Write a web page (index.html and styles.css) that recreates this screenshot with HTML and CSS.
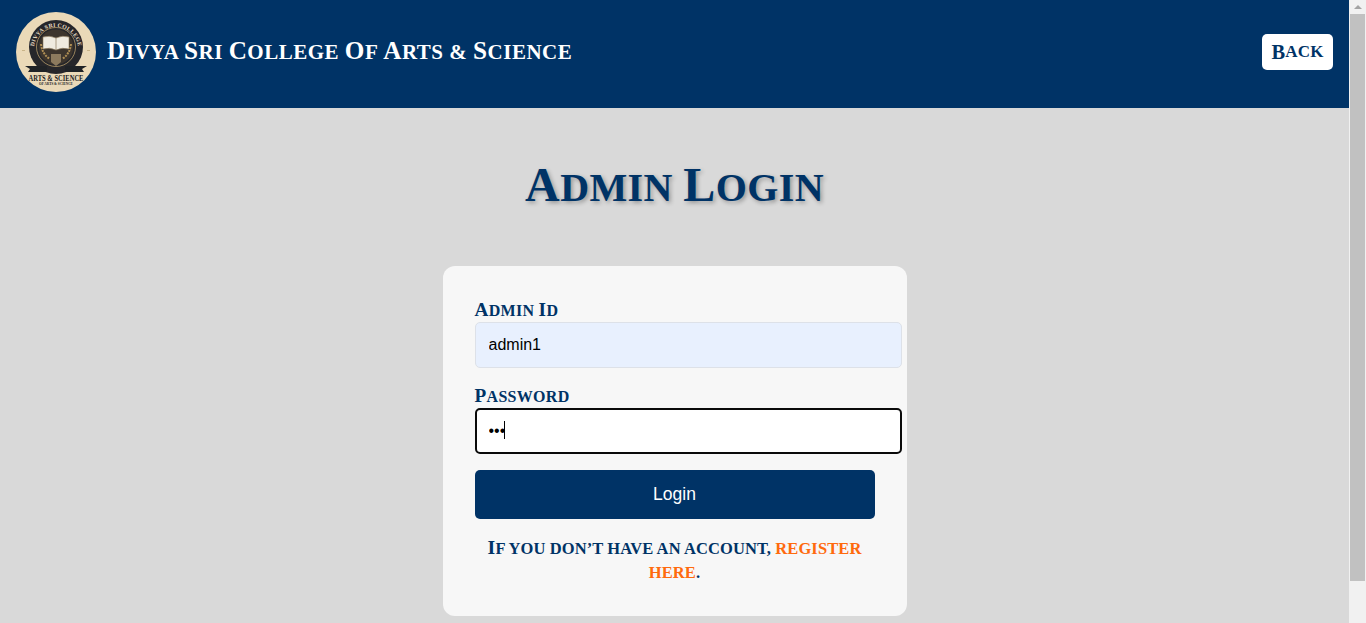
FILE: index.html
```html
<!DOCTYPE html>
<html lang="en">
<head>
<meta charset="utf-8">
<title>Admin Login</title>
<link rel="stylesheet" href="styles.css">
</head>
<body>
<div class="page">
  <div class="main">
    <header class="topbar">
      <div class="brand">
        <svg class="logo" viewBox="0 0 80 80" role="img" aria-label="College crest">
          <circle cx="40" cy="40" r="40" fill="#ead9b8"/>
          <circle cx="40" cy="35" r="27" fill="#26262a"/>
          <circle cx="40" cy="35" r="19.500" fill="none" stroke="#b59a68" stroke-width=".8"/>
          <circle cx="40" cy="35" r="17.500" fill="#3d352d"/>
          <path id="arc" d="M18 37a22 22 0 0 1 44 0" fill="none"/>
          <text class="logo-arc"><textPath href="#arc" startOffset="50%" text-anchor="middle">DIVYA SRI COLLEGE</textPath></text>
          <path d="M27 25q7-2 13 1q6-3 13-1v12q-7-2-13 1q-6-3-13-1z" fill="#f0ebe0" stroke="#8d7a5c" stroke-width=".6"/>
          <path d="M40 26v12" stroke="#8d7a5c" stroke-width=".7"/>
          <path d="M25 32q1 10 9 15M55 32q-1 10-9 15" fill="none" stroke="#b08f55" stroke-width="2" stroke-dasharray="2 1"/>
          <path d="M35 42h10v8l-5 4-5-4z" fill="#8c7a5e"/>
          <rect x="6" y="38" width="3" height="1" fill="#c9b488"/>
          <rect x="71" y="38" width="3" height="1" fill="#c9b488"/>
          <path d="M9 54h22v6H12l2-3zM71 54H49v6h19l-2-3z" fill="#1f2226"/>
          <text class="logo-main" text-anchor="middle" transform="translate(40 68.500) scale(.86 1)">ARTS &amp; SCIENCE</text>
          <text class="logo-sub" x="40" y="73" text-anchor="middle">OF ARTS &amp; SCIENCE</text>
        </svg>
        <span class="brand-name"><span class="cap">D</span>ivya <span class="cap">S</span>ri <span class="cap">C</span>ollege <span class="cap">O</span>f <span class="cap">A</span>rts &amp; <span class="cap">S</span>cience</span>
      </div>
      <a class="back" href="#"><span class="cap">B</span>ack</a>
    </header>
    <main class="content">
      <h1 class="heading"><span class="cap">A</span>dmin <span class="cap">L</span>ogin</h1>
      <form class="card">
        <label class="label" for="id"><span class="cap">A</span>dmin <span class="cap">I</span>d</label>
        <input class="field field-filled" id="id" type="text" value="admin1">
        <label class="label label-second" for="pw"><span class="cap">P</span>assword</label>
        <div class="field-wrap">
          <input class="field field-focus" id="pw" type="password" value="abc">
          <span class="caret"></span>
        </div>
        <button class="submit" type="button">Login</button>
        <p class="note"><span class="cap">I</span>f you don’t have an account, <a href="#">register here</a>.</p>
      </form>
    </main>
  </div>
  <div class="scrollbar">
    <div class="arrow"></div>
    <div class="thumb"></div>
  </div>
</div>
</body>
</html>
```
FILE: styles.css
```css
* { box-sizing: border-box; }
html, body { margin: 0; height: 100%; overflow: hidden; }
body { background: #d9d9d9; font-family: "Liberation Serif", serif; }
.page { display: flex; height: 623px; }
.main { flex: 1; min-width: 0; overflow: hidden; }

.cap { font-size: 1.2em; }

.topbar {
  height: 108px;
  background: #003366;
  display: flex;
  justify-content: space-between;
  align-items: flex-start;
  padding: 12px 16px;
}
.brand { display: flex; align-items: center; gap: 11px; }
.logo { width: 80px; height: 80px; display: block; }
.logo-arc { font: 700 5.800px "Liberation Serif", serif; fill: #e8dcc2; letter-spacing: .25px; }
.logo-main { font: 700 7.600px "Liberation Serif", serif; fill: #1d1d1f; }
.logo-sub { font: 700 3.400px "Liberation Serif", serif; fill: #1d1d1f; }
.brand-name {
  position: relative;
  top: -1px;
  color: #fff;
  font-size: 21px;
  font-weight: 700;
  text-transform: uppercase;
  letter-spacing: .5px;
  white-space: nowrap;
}
.back {
  margin-top: 22px;
  width: 71px;
  height: 36px;
  background: #fff;
  color: #003366;
  border-radius: 5px;
  display: flex;
  align-items: center;
  justify-content: center;
  font-size: 17px;
  font-weight: 700;
  text-transform: uppercase;
  letter-spacing: .2px;
  text-decoration: none;
}

.content { display: flex; flex-direction: column; align-items: center; }
.heading {
  margin: 50px 0 54px;
  height: 54px;
  line-height: 54px;
  color: #003366;
  font-size: 40px;
  font-weight: 700;
  text-transform: uppercase;
  letter-spacing: .4px;
  text-shadow: 2px 2px 4px rgba(0, 0, 0, .3);
}
.card {
  width: 464px;
  height: 350px;
  background: #f7f7f7;
  border-radius: 12px;
  padding: 32px;
  flex: none;
}
.label {
  display: block;
  height: 24px;
  line-height: 24px;
  color: #003366;
  font-size: 16px;
  font-weight: 700;
  text-transform: uppercase;
  letter-spacing: .3px;
}
.label-second { margin-top: 16px; }
.field-wrap { position: relative; width: 427px; }
.field {
  display: block;
  width: 427px;
  height: 46px;
  padding: 0 13px;
  border: 1px solid #dde1e8;
  border-radius: 5px;
  background: #fff;
  color: #000;
  font-family: "Liberation Sans", sans-serif;
  font-size: 16px;
  outline: none;
}
.field-filled { background: #e8f0fe; }
.field-focus { border: 2px solid #0a0a0a; padding: 0 12px; caret-color: transparent; }
.caret {
  position: absolute;
  left: 29px;
  top: 13px;
  width: 1px;
  height: 18px;
  background: #000;
}
.submit {
  display: block;
  width: 400px;
  height: 49px;
  margin-top: 16px;
  border: 0;
  border-radius: 5px;
  background: #003366;
  color: #fff;
  font-family: "Liberation Sans", sans-serif;
  font-size: 17.500px;
  cursor: pointer;
}
.note {
  margin: 16px 0 0;
  width: 400px;
  text-align: center;
  color: #003366;
  font-size: 16.500px;
  line-height: 24px;
  font-weight: 700;
  text-transform: uppercase;
  letter-spacing: .1px;
}
.note a { color: #ff6a0d; text-decoration: none; }

.scrollbar { width: 17px; flex: none; background: #f1f1f1; display: flex; flex-direction: column; align-items: center; }
.arrow {
  width: 0;
  height: 0;
  margin: 5px 0 5px;
  border-left: 4px solid transparent;
  border-right: 4px solid transparent;
  border-bottom: 4px solid #a3a3a3;
}
.thumb { width: 15px; height: 567px; background: #c1c1c1; }
```
